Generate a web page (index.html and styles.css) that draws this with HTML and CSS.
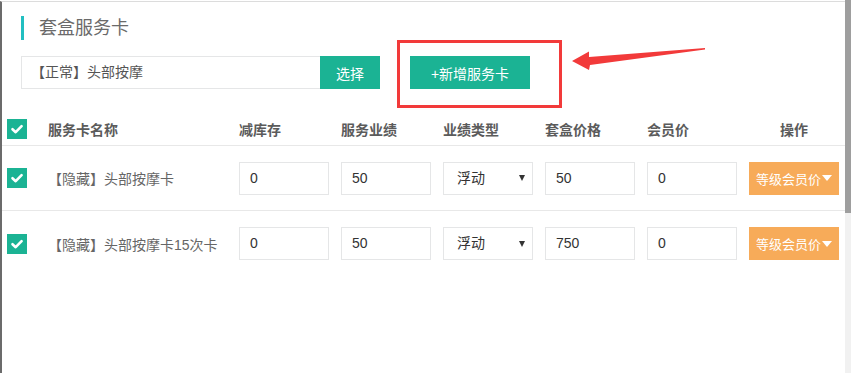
FILE: index.html
```html
<!DOCTYPE html>
<html lang="zh-CN">
<head>
<meta charset="utf-8">
<title>套盒服务卡</title>
<link rel="stylesheet" href="styles.css">
</head>
<body>
<div class="frame">
  <div class="page">
    <div class="title"><span class="title-bar"></span><span class="title-text">套盒服务卡</span></div>
    <div class="search-row">
      <div class="search-input">【正常】头部按摩</div>
      <button class="btn btn-green btn-select">选择</button>
      <button class="btn btn-green btn-add">+新增服务卡</button>
    </div>
    <div class="table">
      <div class="tr thead">
        <span class="check"><svg viewBox="0 0 20 20" width="20" height="20"><path d="M5.5 10.2 L8.7 13.2 L14.6 7.2" fill="none" stroke="#fff" stroke-width="2.6" stroke-linecap="round" stroke-linejoin="round"/></svg></span>
        <span class="name">服务卡名称</span>
        <span class="th">减库存</span>
        <span class="th">服务业绩</span>
        <span class="th">业绩类型</span>
        <span class="th">套盒价格</span>
        <span class="th">会员价</span>
        <span class="th center">操作</span>
      </div>
      <div class="tr row">
        <span class="check"><svg viewBox="0 0 20 20" width="20" height="20"><path d="M5.5 10.2 L8.7 13.2 L14.6 7.2" fill="none" stroke="#fff" stroke-width="2.6" stroke-linecap="round" stroke-linejoin="round"/></svg></span>
        <span class="name cell-name">【隐藏】头部按摩卡</span>
        <span class="field">0</span>
        <span class="field">50</span>
        <span class="field select">浮动<i class="caret"></i></span>
        <span class="field">50</span>
        <span class="field">0</span>
        <button class="btn btn-orange">等级会员价<i class="caret-white"></i></button>
      </div>
      <div class="tr row last">
        <span class="check"><svg viewBox="0 0 20 20" width="20" height="20"><path d="M5.5 10.2 L8.7 13.2 L14.6 7.2" fill="none" stroke="#fff" stroke-width="2.6" stroke-linecap="round" stroke-linejoin="round"/></svg></span>
        <span class="name cell-name">【隐藏】头部按摩卡15次卡</span>
        <span class="field">0</span>
        <span class="field">50</span>
        <span class="field select">浮动<i class="caret"></i></span>
        <span class="field">750</span>
        <span class="field">0</span>
        <button class="btn btn-orange">等级会员价<i class="caret-white"></i></button>
      </div>
    </div>
  </div>
  <div class="scrollbar"><div class="thumb"></div></div>

  <div class="annot-box"></div>
  <svg class="annot-arrow" viewBox="0 0 140 30" width="140" height="30">
    <polygon points="2,16 19,6.5 19,12 135,3 135,4.6 20,20 19,25" fill="#f23a3a"/>
  </svg>
</div>
</body>
</html>
```
FILE: styles.css
```css
* { box-sizing: border-box; }
html, body { margin: 0; padding: 0; background: #fff; }
body {
  font-family: "Liberation Sans", "Noto Sans CJK SC", sans-serif;
  font-size: 14px;
  color: #555;
}
.frame {
  position: relative;
  display: flex;
  width: 851px;
  height: 373px;
  overflow: hidden;
}
.page {
  flex: 1;
  border-left: 2px solid #6b6b6b;
  border-top: 1px solid #dcdcdc;
  margin-top: 1px;
  background: #fff;
}
.scrollbar {
  width: 6px;
  background: #f1f1f1;
}
.thumb {
  height: 213px;
  background: #9e9e9e;
}

/* title */
.title {
  display: flex;
  align-items: center;
  gap: 15px;
  margin: 14px 0 0 19px;
  height: 24px;
}
.title-bar {
  width: 3px;
  height: 24px;
  background: #22bfc1;
}
.title-text {
  font-size: 18px;
  line-height: 24px;
  color: #6a6a6a;
}

/* search row */
.search-row {
  display: flex;
  margin: 16px 0 0 19px;
  height: 33px;
}
.search-input {
  width: 299px;
  height: 33px;
  border: 1px solid #e5e6e7;
  border-right: none;
  padding-left: 9px;
  line-height: 31px;
  color: #555;
}
.btn {
  font-family: inherit;
  font-size: 14px;
  border: none;
  color: #fff;
  cursor: pointer;
  padding: 0;
}
.btn-green {
  background: #1bb394;
  height: 33px;
}
.btn-select { width: 60px; }
.btn-add { width: 120px; margin-left: 30px; }

/* table */
.table {
  margin-top: 23px;
}
.tr {
  display: grid;
  grid-template-columns: 20px 188px repeat(6, 90px);
  column-gap: 12px;
  align-items: center;
  padding-left: 5px;
  border-bottom: 1px solid #e8e8e8;
}
.tr.last { border-bottom: none; }
.thead {
  height: 34px;
  font-weight: bold;
  color: #5b5b5b;
}
.row {
  height: 65px;
}
.check {
  width: 20px;
  height: 20px;
  background: #1bb394;
  display: block;
}
.check svg { display: block; }
.name { padding-left: 9px; }
.cell-name { color: #666; }
.th.center { text-align: center; }

.field {
  height: 33px;
  border: 1px solid #e5e6e7;
  padding-left: 10px;
  line-height: 31px;
  color: #333;
  background: #fff;
}
.select {
  display: flex;
  align-items: center;
  justify-content: space-between;
  padding-right: 7px;
  padding-left: 13px;
}
.caret {
  width: 0;
  height: 0;
  border-left: 3.5px solid transparent;
  border-right: 3.5px solid transparent;
  border-top: 6px solid #333;
}
.btn-orange {
  height: 33px;
  width: 90px;
  font-size: 13px;
  background: #f7ab59;
  display: flex;
  align-items: center;
  justify-content: center;
}
.caret-white {
  width: 0;
  height: 0;
  border-left: 5px solid transparent;
  border-right: 5px solid transparent;
  border-top: 6px solid #fff;
  margin-left: 1px;
}

/* annotation overlay */
.annot-box {
  position: absolute;
  left: 397px;
  top: 40px;
  width: 165px;
  height: 68px;
  border: 3px solid #f23a3a;
}
.annot-arrow {
  position: absolute;
  left: 570px;
  top: 45px;
}
```
